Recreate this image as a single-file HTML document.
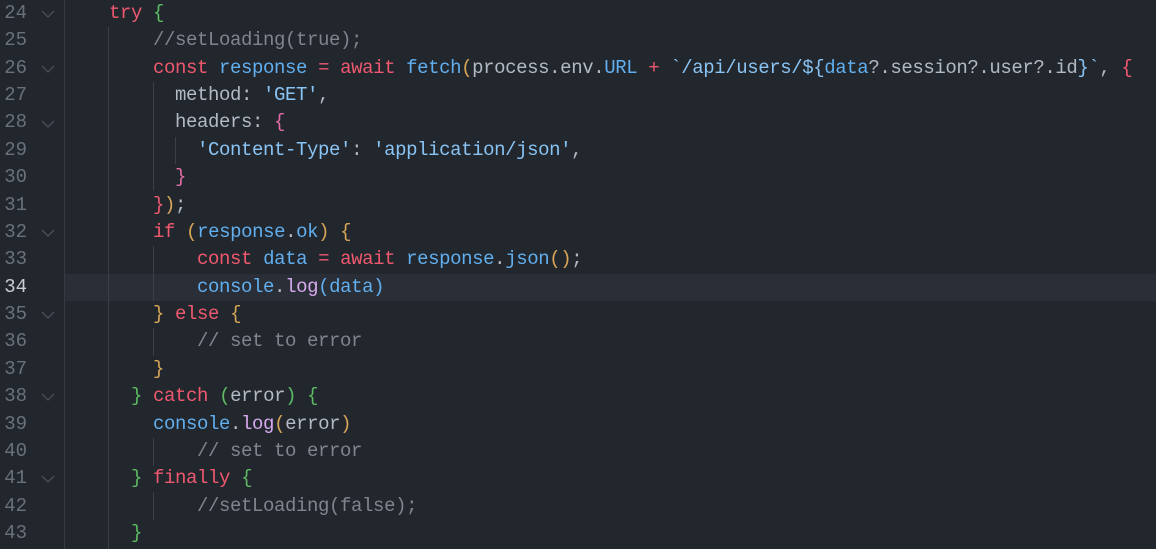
<!DOCTYPE html>
<html><head><meta charset="utf-8"><style>
html,body{margin:0;padding:0;background:#22262d;width:1156px;height:549px;overflow:hidden}
.wrap{position:relative;width:1156px;height:549px;font-family:"Liberation Mono",monospace;font-size:19px;letter-spacing:-0.4px}
.ln{position:absolute;left:0;width:1156px;height:27.37px;line-height:27.37px;white-space:pre}
.num{position:absolute;left:0;width:27px;text-align:right;color:#6b717c;letter-spacing:0}
.code{position:absolute;left:65px;color:#b4bac5}
.hl{position:absolute;left:65px;top:273.7px;width:1091px;height:27.4px;background:#2a2e36}
.sep{position:absolute;left:64px;top:0;width:1px;height:549px;background:#353a43}
.g{position:absolute;width:1px;background:#3a3f48}
.chev{position:absolute;left:41px;width:14px;height:8px}
.k{color:#ef596f}.b{color:#61afef}.c{color:#7f848e}.s{color:#89c4f4}.gr{color:#5dbb63}.y{color:#d8a657}.p{color:#e36ca6}.l{color:#d7a9ee}
</style></head><body><div class="wrap">
<div class="hl"></div>
<div class="sep"></div>
<div class="g" style="left:108px;top:27px;height:522px"></div>
<div class="g" style="left:153px;top:82px;height:109px"></div>
<div class="g" style="left:153px;top:246px;height:55px"></div>
<div class="g" style="left:153px;top:328px;height:28px"></div>
<div class="g" style="left:153px;top:438px;height:28px"></div>
<div class="g" style="left:153px;top:492px;height:28px"></div>
<div class="g" style="left:175px;top:137px;height:27px"></div>

<div class="ln" style="top:0px"><span class="num">24</span><span class="code">    <span class="k">try</span> <span class="gr">{</span></span></div>
<div class="ln" style="top:27.37px"><span class="num">25</span><span class="code">        <span class="c">//setLoading(true);</span></span></div>
<div class="ln" style="top:54.74px"><span class="num">26</span><span class="code">        <span class="k">const</span> <span class="b">response</span> <span class="k">=</span> <span class="k">await</span> <span class="b">fetch</span><span class="y">(</span>process.env.<span class="b">URL</span> <span class="k">+</span> <span class="s">`/api/users/${</span><span class="b">data</span>?.session?.user?.id<span class="s">}`</span>, <span class="k">{</span></span></div>
<div class="ln" style="top:82.11px"><span class="num">27</span><span class="code">          method: <span class="s">'GET'</span>,</span></div>
<div class="ln" style="top:109.48px"><span class="num">28</span><span class="code">          headers: <span class="p">{</span></span></div>
<div class="ln" style="top:136.85px"><span class="num">29</span><span class="code">            <span class="s">'Content-Type'</span>: <span class="s">'application/json'</span>,</span></div>
<div class="ln" style="top:164.22px"><span class="num">30</span><span class="code">          <span class="p">}</span></span></div>
<div class="ln" style="top:191.59px"><span class="num">31</span><span class="code">        <span class="k">}</span><span class="y">)</span>;</span></div>
<div class="ln" style="top:218.96px"><span class="num">32</span><span class="code">        <span class="k">if</span> <span class="y">(</span><span class="b">response</span>.<span class="b">ok</span><span class="y">)</span> <span class="y">{</span></span></div>
<div class="ln" style="top:246.33px"><span class="num">33</span><span class="code">            <span class="k">const</span> <span class="b">data</span> <span class="k">=</span> <span class="k">await</span> <span class="b">response</span>.<span class="b">json</span><span class="y">()</span>;</span></div>
<div class="ln" style="top:273.7px"><span class="num" style="color:#c8ccd4">34</span><span class="code">            <span class="b">console</span>.<span class="l">log</span><span class="b">(data)</span></span></div>
<div class="ln" style="top:301.07px"><span class="num">35</span><span class="code">        <span class="y">}</span> <span class="k">else</span> <span class="y">{</span></span></div>
<div class="ln" style="top:328.44px"><span class="num">36</span><span class="code">            <span class="c">// set to error</span></span></div>
<div class="ln" style="top:355.81px"><span class="num">37</span><span class="code">        <span class="y">}</span></span></div>
<div class="ln" style="top:383.18px"><span class="num">38</span><span class="code">      <span class="gr">}</span> <span class="k">catch</span> <span class="gr">(</span>error<span class="gr">)</span> <span class="gr">{</span></span></div>
<div class="ln" style="top:410.55px"><span class="num">39</span><span class="code">        <span class="b">console</span>.<span class="l">log</span><span class="y">(</span>error<span class="y">)</span></span></div>
<div class="ln" style="top:437.92px"><span class="num">40</span><span class="code">            <span class="c">// set to error</span></span></div>
<div class="ln" style="top:465.29px"><span class="num">41</span><span class="code">      <span class="gr">}</span> <span class="k">finally</span> <span class="gr">{</span></span></div>
<div class="ln" style="top:492.66px"><span class="num">42</span><span class="code">            <span class="c">//setLoading(false);</span></span></div>
<div class="ln" style="top:520.03px"><span class="num">43</span><span class="code">      <span class="gr">}</span></span></div>

<svg class="chev" style="top:10px" viewBox="0 0 14 8"><path d="M1 1 L7 7 L13 1" fill="none" stroke="#4a505a" stroke-width="1.3"/></svg>
<svg class="chev" style="top:65px" viewBox="0 0 14 8"><path d="M1 1 L7 7 L13 1" fill="none" stroke="#4a505a" stroke-width="1.3"/></svg>
<svg class="chev" style="top:120px" viewBox="0 0 14 8"><path d="M1 1 L7 7 L13 1" fill="none" stroke="#4a505a" stroke-width="1.3"/></svg>
<svg class="chev" style="top:229px" viewBox="0 0 14 8"><path d="M1 1 L7 7 L13 1" fill="none" stroke="#4a505a" stroke-width="1.3"/></svg>
<svg class="chev" style="top:311px" viewBox="0 0 14 8"><path d="M1 1 L7 7 L13 1" fill="none" stroke="#4a505a" stroke-width="1.3"/></svg>
<svg class="chev" style="top:393px" viewBox="0 0 14 8"><path d="M1 1 L7 7 L13 1" fill="none" stroke="#4a505a" stroke-width="1.3"/></svg>
<svg class="chev" style="top:475px" viewBox="0 0 14 8"><path d="M1 1 L7 7 L13 1" fill="none" stroke="#4a505a" stroke-width="1.3"/></svg>
</div></body></html>
